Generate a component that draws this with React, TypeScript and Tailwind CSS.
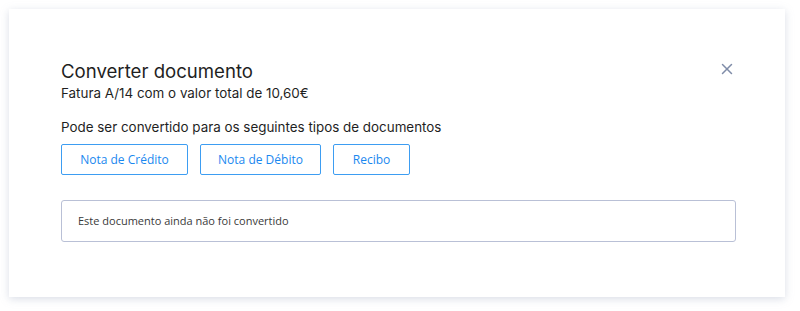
import { X } from "lucide-react";

const targets = [
  { label: "Nota de Crédito", w: "w-[127px]" },
  { label: "Nota de Débito", w: "w-[121px]" },
  { label: "Recibo", w: "w-[77px]" },
];

export default function App() {
  return (
    <div className="h-[311px] w-[800px] bg-white pl-[9px] pt-[9px] font-['Open_Sans',sans-serif]">
      <div className="relative h-[288px] w-[776px] bg-white px-[52px] pt-[49px] shadow-[0_2px_8px_rgba(150,160,185,0.35)]">
        <button
          type="button"
          className="absolute right-[49px] top-[51px] text-[#7f8ca8]"
          aria-label="Fechar"
        >
          <X size={18} strokeWidth={2} />
        </button>

        <div className="font-['Inter',sans-serif] text-[#1f1f1f]">
          <h2 className="text-[18.6px] leading-[26px]">Converter documento</h2>
          <p className="text-[13.4px] leading-[18px]">Fatura A/14 com o valor total de 10,60€</p>
          <p className="mt-[16px] text-[13.4px] leading-[18px]">
            Pode ser convertido para os seguintes tipos de documentos
          </p>
        </div>

        <div className="mt-[8px] flex gap-[12px]">
          {targets.map((t) => (
            <button
              key={t.label}
              type="button"
              className={`h-[31px] ${t.w} rounded-[2px] border border-[#3d9df2] text-[12px] text-[#1a88ef]`}
            >
              {t.label}
            </button>
          ))}
        </div>

        <div className="mt-[25px] flex h-[42px] w-[675px] items-center rounded-[3px] border border-[#b9c0d6] px-[16px] text-[11px] text-[#3a3a3a]">
          Este documento ainda não foi convertido
        </div>
      </div>
    </div>
  );
}
